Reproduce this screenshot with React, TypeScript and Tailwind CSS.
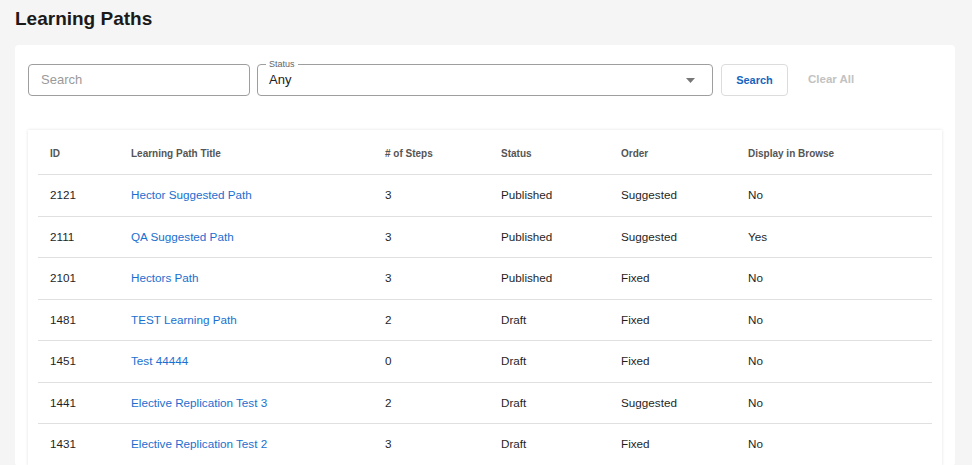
const rows = [
  { id: "2121", title: "Hector Suggested Path", steps: "3", status: "Published", order: "Suggested", browse: "No" },
  { id: "2111", title: "QA Suggested Path", steps: "3", status: "Published", order: "Suggested", browse: "Yes" },
  { id: "2101", title: "Hectors Path", steps: "3", status: "Published", order: "Fixed", browse: "No" },
  { id: "1481", title: "TEST Learning Path", steps: "2", status: "Draft", order: "Fixed", browse: "No" },
  { id: "1451", title: "Test 44444", steps: "0", status: "Draft", order: "Fixed", browse: "No" },
  { id: "1441", title: "Elective Replication Test 3", steps: "2", status: "Draft", order: "Suggested", browse: "No" },
  { id: "1431", title: "Elective Replication Test 2", steps: "3", status: "Draft", order: "Fixed", browse: "No" },
];

const cols = "grid grid-cols-[81px_254px_116px_120px_127px_1fr]";

export default function App() {
  return (
    <div className="min-h-[465px] bg-[#f5f5f5] px-[15px] pt-[7px] font-['Liberation_Sans',Arial,sans-serif] text-[#222]">
      <h1 className="text-[19px] font-bold leading-[24px] text-[#1a1a1a]">Learning Paths</h1>

      <div className="mt-[14px] mr-[2px] rounded-[4px] bg-white px-[13px] pt-[19px]">
        {/* filters */}
        <div className="flex items-center">
          <div className="flex h-[32px] w-[222px] items-center rounded-[4px] border border-[#9e9e9e] px-[12px] text-[13px] text-[#9a9a9a]">
            Search
          </div>
          <div className="relative ml-[7px] flex h-[32px] w-[456px] items-center rounded-[4px] border border-[#9e9e9e] px-[11px] text-[13px] text-[#222]">
            <span className="absolute -top-[7px] left-[8px] bg-white px-[3px] text-[9px] leading-[12px] text-[#666]">Status</span>
            <span>Any</span>
            <svg className="ml-auto mr-[6px]" width="9" height="5" viewBox="0 0 9 5">
              <path d="M0 0h9L4.5 5z" fill="#777" />
            </svg>
          </div>
          <button className="ml-[8px] h-[32px] w-[67px] rounded-[4px] border border-[#dcdcdc] text-[11px] font-bold text-[#1565c0]">
            Search
          </button>
          <button className="ml-[20px] text-[11.5px] font-bold text-[#c2c2c2]">Clear All</button>
        </div>

        {/* table */}
        <div className="mt-[34px] bg-white px-[10px] shadow-[0_0_3px_rgba(0,0,0,0.12)]">
          <div className={`${cols} h-[45px] items-center border-b border-[#e0e0e0] pt-[2px] text-[10px] font-semibold text-[#555]`}>
            <div className="pl-[12px]">ID</div>
            <div className="pl-[12px]">Learning Path Title</div>
            <div className="pl-[12px]"># of Steps</div>
            <div className="pl-[12px]">Status</div>
            <div className="pl-[12px]">Order</div>
            <div className="pl-[12px]">Display in Browse</div>
          </div>
          {rows.map((r) => (
            <div
              key={r.id}
              className={`${cols} h-[41.5px] items-center border-b border-[#e0e0e0] text-[11.7px] font-medium text-[#1f1f1f]`}
            >
              <div className="pl-[12px]">{r.id}</div>
              <div className="pl-[12px] text-[#1a6fd0]">{r.title}</div>
              <div className="pl-[12px]">{r.steps}</div>
              <div className="pl-[12px]">{r.status}</div>
              <div className="pl-[12px]">{r.order}</div>
              <div className="pl-[12px]">{r.browse}</div>
            </div>
          ))}
        </div>
      </div>
    </div>
  );
}
